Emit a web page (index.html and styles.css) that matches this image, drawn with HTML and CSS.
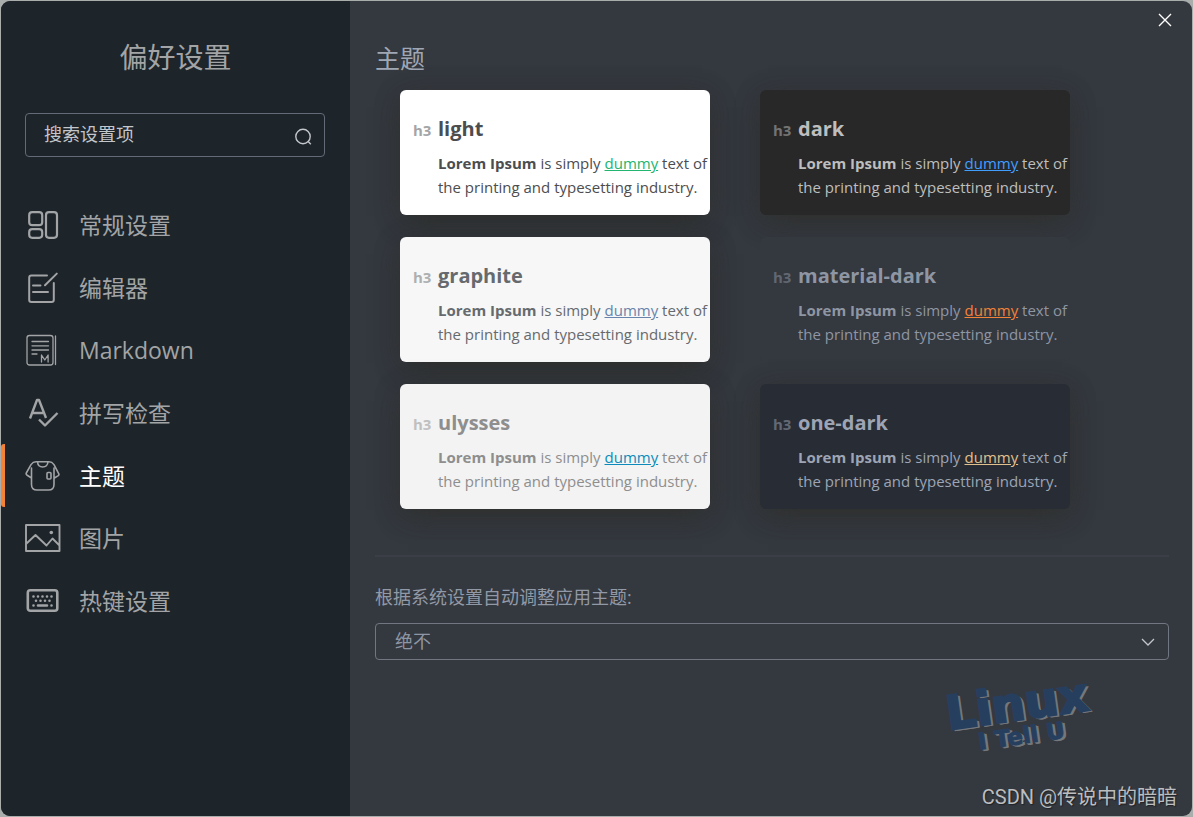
FILE: index.html
```html
<!DOCTYPE html>
<html lang="zh-CN">
<head>
<meta charset="utf-8">
<title>偏好设置</title>
<link rel="stylesheet" href="styles.css">
</head>
<body>
<div class="window">
  <aside class="sidebar">
    <h1 class="sidebar-title">偏好设置</h1>
    <label class="search">
      <input class="search-input" type="text" placeholder="搜索设置项" aria-label="搜索设置项">
      <svg class="search-icon" viewBox="0 0 18 18"><circle cx="9" cy="8.5" r="7.2"/><path d="M14.2 13.6l2.6 2.6"/></svg>
    </label>
    <nav class="nav">
      <a class="nav-item" href="#general">
        <svg class="nav-icon" viewBox="0 0 36 36"><g stroke-width="2.2"><rect x="4.2" y="5.2" width="13" height="13" rx="3"/><rect x="4.2" y="22.2" width="13" height="8.6" rx="3"/><rect x="21" y="5.2" width="11" height="25.6" rx="3"/></g></svg>
        <span>常规设置</span>
      </a>
      <a class="nav-item" href="#editor">
        <svg class="nav-icon" viewBox="0 0 36 36"><g stroke-width="2"><path d="M22 5.6H6.4Q4.2 5.6 4.2 7.8V29.8Q4.2 32 6.4 32H26.6Q28.8 32 28.8 29.8V13"/><path d="M31.8 3.6L20 15.2M8 15.6h7.500M8 22h15"/></g></svg>
        <span>编辑器</span>
      </a>
      <a class="nav-item" href="#markdown">
        <svg class="nav-icon" viewBox="0 0 36 36"><g stroke-width="1.300"><rect x="2" y="3.500" width="26" height="29.500" rx="2.500"/><path d="M30.500 4v28.500M7 9.500h16.500M7 13.800h16.500M7 18h16.500M7 22h5M16.500 30v-7l3.300 5 3.300-5v7"/></g></svg>
        <span>Markdown</span>
      </a>
      <a class="nav-item" href="#spelling">
        <svg class="nav-icon" viewBox="0 0 36 36"><g stroke-width="2.400" stroke-linecap="butt"><path d="M5 23.500L12 5h2l7 18M8 18h10M14 24.500l6 6L32.500 18"/></g></svg>
        <span>拼写检查</span>
      </a>
      <a class="nav-item active" href="#theme" aria-current="page">
        <svg class="nav-icon" viewBox="0 0 36 36"><g stroke-width="1.600"><path d="M11 3.800H24Q27 3.800 29 6.600L33.800 15.800Q34.200 17 33.300 17.600L29 20.200V26.500Q29 32 23.500 32H12Q6.500 32 6.500 26.500V20L1.800 17Q.8 16.200 1.300 15L6 6.600Q8 3.800 11 3.800ZM29 20V10M6.500 20V10M12.500 4Q13 9 17.700 9T23 4"/><rect x="22" y="14.500" width="4" height="6.500" rx="1"/></g></svg>
        <span>主题</span>
      </a>
      <a class="nav-item" href="#image">
        <svg class="nav-icon" viewBox="0 0 36 36"><g stroke-width="1.900"><path d="M1 5h33.500v26H1ZM1.500 23.500L10.500 15l11 10.500 6-7 6.500 6.500"/></g><circle class="solid" cx="26.300" cy="12.500" r="1.800"/></svg>
        <span>图片</span>
      </a>
      <a class="nav-item" href="#keys">
        <svg class="nav-icon" viewBox="0 0 36 36"><rect x="2.800" y="7.300" width="29.500" height="20.500" rx="2.500" stroke-width="2.600"/><path stroke-width="2.600" d="M8.500 13.500h.01M13 13.500h.01M17.500 13.500h.01M22 13.500h.01M26.500 13.500h.01M11 17.700h.01M15.500 17.700h.01M20 17.700h.01M24.500 17.700h.01M8.500 22.500h.01M13 22.500h9M26.500 22.500h.01"/></svg>
        <span>热键设置</span>
      </a>
    </nav>
  </aside>

  <main class="content">
    <button class="close" type="button" aria-label="关闭"><svg class="close-icon" viewBox="0 0 14 14"><path d="M1 1l12 12M13 1L1 13"/></svg></button>
    <h2 class="content-title">主题</h2>
    <div class="themes">
      <article class="theme light"><h3 class="theme-name">light</h3><p class="theme-text"><strong>Lorem Ipsum</strong> is simply <a class="theme-link" href="#light">dummy</a> text of<br>the printing and typesetting industry.</p></article>
      <article class="theme dark"><h3 class="theme-name">dark</h3><p class="theme-text"><strong>Lorem Ipsum</strong> is simply <a class="theme-link" href="#dark">dummy</a> text of<br>the printing and typesetting industry.</p></article>
      <article class="theme graphite"><h3 class="theme-name">graphite</h3><p class="theme-text"><strong>Lorem Ipsum</strong> is simply <a class="theme-link" href="#graphite">dummy</a> text of<br>the printing and typesetting industry.</p></article>
      <article class="theme material-dark"><h3 class="theme-name">material-dark</h3><p class="theme-text"><strong>Lorem Ipsum</strong> is simply <a class="theme-link" href="#material-dark">dummy</a> text of<br>the printing and typesetting industry.</p></article>
      <article class="theme ulysses"><h3 class="theme-name">ulysses</h3><p class="theme-text"><strong>Lorem Ipsum</strong> is simply <a class="theme-link" href="#ulysses">dummy</a> text of<br>the printing and typesetting industry.</p></article>
      <article class="theme one-dark"><h3 class="theme-name">one-dark</h3><p class="theme-text"><strong>Lorem Ipsum</strong> is simply <a class="theme-link" href="#one-dark">dummy</a> text of<br>the printing and typesetting industry.</p></article>
    </div>
    <hr class="separator">
    <label class="field-label" for="auto-theme">根据系统设置自动调整应用主题:</label>
    <div class="select-box">
      <select class="select" id="auto-theme"><option>绝不</option></select>
      <svg class="chevron" viewBox="0 0 14 8"><path d="M1 1l6 6 6-6"/></svg>
    </div>
    <p class="brand"><span class="brand-large">Linux</span><span class="brand-small">I Tell U</span></p>
    <p class="credit">CSDN @传说中的暗暗</p>
  </main>
</div>
</body>
</html>
```
FILE: styles.css
```css
* { box-sizing: border-box; }

body {
  margin: 0;
  padding: 1px;
  min-height: 100vh;
  display: flex;
  background: #a9adab;
  font-family: "Open Sans", "Noto Sans CJK SC", sans-serif;
}

h1, h2, h3, p { margin: 0; font-weight: 400; }

.window {
  flex: 1;
  display: flex;
  border-radius: 9px;
  overflow: hidden;
  background: #34383f;
}

.sidebar {
  flex: 0 0 349px;
  background: #1d242a;
  color: #a2a4a6;
}

.sidebar-title {
  padding-top: 36px;
  font-size: 28px;
  line-height: 40px;
  text-align: center;
}

.search {
  display: flex;
  align-items: center;
  height: 44px;
  margin: 36px 25px 37px 24px;
  padding: 0 12px 0 18px;
  border: 1px solid #656b76;
  border-radius: 4px;
}

.search-input {
  flex: 1;
  min-width: 0;
  height: 40px;
  padding: 0 0 3px;
  border: 0;
  outline: 0;
  background: none;
  color: #c3c6cb;
  font: inherit;
  font-size: 18px;
}

.search-input::placeholder { color: #c3c6cb; opacity: 1; }

.search-icon {
  width: 18px;
  height: 18px;
  margin-top: 4px;
  fill: none;
  stroke: #c3c6cb;
  stroke-width: 1.4;
}

.nav {
  display: grid;
  grid-auto-rows: 1fr;
  height: 438px;
}

.nav-item {
  display: flex;
  align-items: center;
  gap: 18px;
  padding-left: 24px;
  color: #a2a4a6;
  font-size: 23px;
  line-height: 32px;
  text-decoration: none;
}

.nav-item.active {
  padding-left: 20px;
  border-left: 4px solid #f48237;
  border-radius: 3px;
  color: #fff;
}

.nav-icon {
  width: 36px;
  height: 36px;
  fill: none;
  stroke: #a2a4a6;
  stroke-linecap: round;
  stroke-linejoin: round;
}

.nav-icon .solid { fill: #a2a4a6; stroke: none; }

.content {
  position: relative;
  flex: 1;
  min-width: 0;
  padding: 39px 23px 0 25px;
  color: #9299a6;
}

.close {
  position: absolute;
  top: 4px;
  right: 12px;
  display: flex;
  padding: 8px;
  border: 0;
  background: none;
}

.close-icon {
  width: 14px;
  height: 14px;
  fill: none;
  stroke: #fff;
  stroke-width: 1.4;
}

.content-title {
  font-size: 25px;
  line-height: 36px;
  color: #a0a7b4;
}

.themes {
  display: grid;
  grid-template-columns: repeat(auto-fill, 310px);
  gap: 22px 50px;
  padding: 14px 25px 0;
}

.theme {
  height: 125px;
  padding: 23px 0 0 13px;
  border-radius: 6px;
  box-shadow: 0 9px 28px -8px rgba(45, 45, 40, 0.9), 0 4px 26px rgba(45, 45, 40, 0.3);
}

.theme-name {
  display: flex;
  align-items: baseline;
  font-size: 20px;
  font-weight: 700;
  line-height: 32px;
}

.theme-name::before {
  content: "h3";
  flex: 0 0 25px;
  font-size: 15px;
  opacity: 0.5;
}

.theme-text {
  padding: 5px 0 0 25px;
  font-size: 15px;
  line-height: 24px;
  white-space: nowrap;
}

.theme-text strong { font-weight: 700; }

.light { background: #fff; color: #4c4d4f; }
.light .theme-link { color: #21b56f; }
.dark { background: #282828; color: #bebebe; }
.dark .theme-link { color: #409eff; }
.graphite { background: #f7f7f7; color: #666a6e; }
.graphite .theme-link { color: #6884ac; }
.material-dark { background: #34383f; color: #8f96a3; box-shadow: none; }
.material-dark .theme-link { color: #f48237; }
.ulysses { background: #f3f3f3; color: #8e8e8e; }
.ulysses .theme-link { color: #0c8bba; }
.one-dark { background: #282c34; color: #9da5b4; }
.one-dark .theme-link { color: #e2c08d; }

.separator {
  height: 2px;
  margin: 46px 0 26px;
  border: 0;
  background: #3b3e46;
}

.field-label {
  display: block;
  font-size: 18px;
  line-height: 28px;
}

.select-box {
  position: relative;
  margin-top: 12px;
}

.select {
  width: 100%;
  height: 37px;
  padding: 0 19px 1px;
  border: 1px solid #717780;
  border-radius: 4px;
  appearance: none;
  background: none;
  color: #8f96a3;
  font: inherit;
  font-size: 18px;
}

.chevron {
  position: absolute;
  top: 15px;
  right: 14px;
  width: 14px;
  height: 8px;
  fill: none;
  stroke: #c3c6cb;
  stroke-width: 1.3;
  pointer-events: none;
}

.brand {
  position: absolute;
  right: 102px;
  bottom: 68px;
  display: grid;
  justify-items: center;
  font-family: "DejaVu Sans", sans-serif;
  font-weight: 700;
  color: #273f5f;
  text-shadow: 1px 1px #74777c, 2px 2px #74777c, 3px 2px #74777c;
  -webkit-text-stroke: 1px #273f5f;
  transform: rotate(-8deg);
}

.brand-large {
  font-size: 47px;
  line-height: 40px;
  -webkit-text-stroke-width: 2px;
}

.brand-small { font-size: 23px; line-height: 24px; }

.credit {
  position: absolute;
  right: 15px;
  bottom: 5px;
  font-family: Roboto, "Noto Sans CJK SC", sans-serif;
  font-size: 20px;
  line-height: 28px;
  color: #bbbdbf;
  text-shadow: 1px 1px 1px #202226;
}
```
